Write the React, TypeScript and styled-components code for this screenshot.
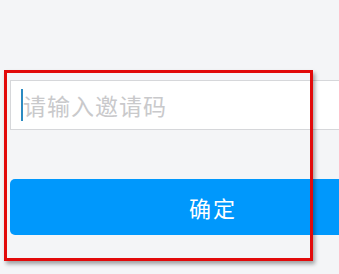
import styled, { createGlobalStyle } from 'styled-components';

const GlobalStyle = createGlobalStyle`
  html, body {
    margin: 0;
    padding: 0;
    background: #f4f5f7;
    font-family: "Noto Sans CJK SC", "Noto Sans", sans-serif;
  }
`;

function App() {
  return (
    <>
      <GlobalStyle />
      <Page>
        <Form>
          <Field>
            <Caret />
            <Placeholder>请输入邀请码</Placeholder>
          </Field>
          <Submit>确定</Submit>
        </Form>
        <Highlight />
      </Page>
    </>
  );
}

const Page = styled.div`
  position: relative;
  width: 339px;
  height: 274px;
  overflow: hidden;
  background: #f4f5f7;
`;

const Form = styled.div`
  width: 420px;
  padding: 80px 0 0 10px;
  display: flex;
  flex-direction: column;
  gap: 49px;
`;

const Field = styled.div`
  height: 50px;
  box-sizing: border-box;
  background: #fff;
  border: 1px solid #d6d7da;
  border-right: none;
  display: flex;
  align-items: center;
  padding-left: 10px;
`;

const Caret = styled.div`
  width: 2px;
  height: 32px;
  background: #2b8bc2;
  flex-shrink: 0;
`;

const Placeholder = styled.span`
  font-size: 23px;
  color: #c9c9cb;
  letter-spacing: 1px;
  line-height: 1;
`;

const Submit = styled.button`
  width: 406px;
  height: 56px;
  border: none;
  border-radius: 5px;
  background: #0098fc;
  color: #fff;
  font-family: inherit;
  font-size: 22px;
  letter-spacing: 2px;
  padding: 0;
`;

const Highlight = styled.div`
  position: absolute;
  left: 4px;
  top: 70px;
  width: 309px;
  height: 191px;
  box-sizing: border-box;
  border: 3px solid #e20a0a;
  box-shadow: 2px 3px 4px rgba(0, 0, 0, 0.35);
  pointer-events: none;
`;

export default App;
